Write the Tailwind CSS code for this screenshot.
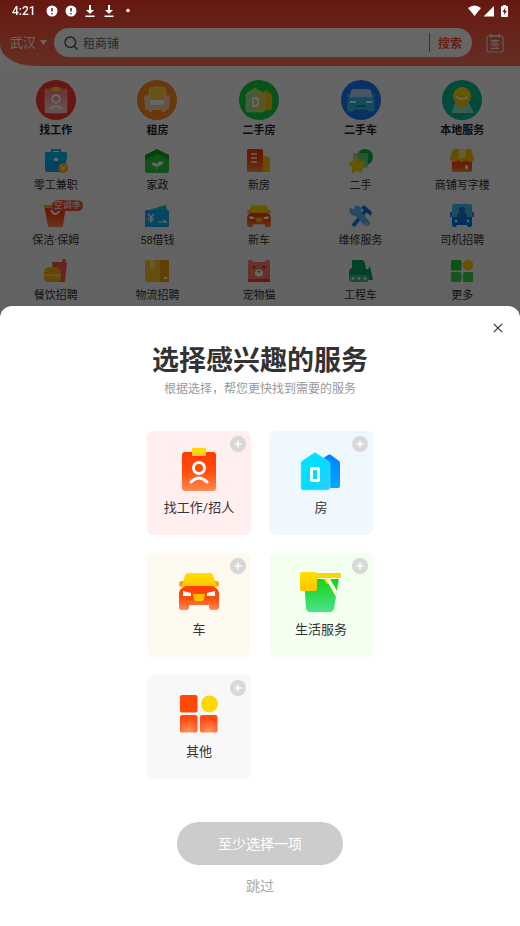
<!doctype html>
<html lang="zh-CN">
  <head>
    <meta charset="UTF-8" />
    <meta name="viewport" content="width=device-width, initial-scale=1.0" />
    <title>选择感兴趣的服务</title>
    <script src="https://cdn.jsdelivr.net/npm/@tailwindcss/browser@4"></script>
  </head>
  <body
    class="min-h-screen overflow-hidden bg-linear-to-b from-white to-[#e4e4e4] font-[Roboto,'Noto_Sans_CJK_SC',sans-serif] text-[#333]"
  >
    <!-- Shared gradients and icons -->
    <svg class="absolute size-0" aria-hidden="true">
      <defs>
        <linearGradient id="red" x2="0" y2="1"><stop stop-color="#ff3c00" /><stop offset=".5" stop-color="#ff4d0c" /><stop offset="1" stop-color="#ff8a50" /></linearGradient>
        <linearGradient id="yellow" x2="0" y2="1"><stop stop-color="#ffe000" /><stop offset="1" stop-color="#ffc400" /></linearGradient>
        <linearGradient id="cyan" x2="1" y2="1"><stop stop-color="#00e5ff" /><stop offset=".5" stop-color="#00dcff" /><stop offset="1" stop-color="#3cf" /></linearGradient>
        <linearGradient id="blue" x2="0" y2="1"><stop stop-color="#0080ff" /><stop offset="1" stop-color="#00a8ff" /></linearGradient>
        <linearGradient id="green" x2="0" y2="1"><stop stop-color="#12d312" /><stop offset="1" stop-color="#4be38a" /></linearGradient>
        <linearGradient id="frost" x2="0" y2="1"><stop stop-color="#fff" stop-opacity=".35" /><stop offset="1" stop-color="#fff" stop-opacity=".8" /></linearGradient>
        <linearGradient id="mint" x2="1" y2="0"><stop stop-color="#8ff0b0" /><stop offset="1" stop-color="#f3d13a" /></linearGradient>
        <radialGradient id="glow" cy="1" r=".8"><stop stop-color="#ff9a68" /><stop offset="1" stop-color="#ff4a12" /></radialGradient>
      </defs>
      <symbol id="car" viewBox="0 0 44 44">
        <rect x="2" y="12" width="40" height="6" rx="3" fill="#ff9a1f" />
        <path d="M11 4h22q2 0 3 2l4 12H5L8 6q1-2 3-2z" fill="url(#yellow)" />
        <path d="M2 25q0-4 3-6 2-2 5-2h24q3 0 5 2 3 2 3 6v13q0 3-3 3h-4q-3 0-3-3v-2H12v2q0 3-3 3H5q-3 0-3-3z" fill="url(#red)" />
        <path d="M6 22l8 2v3H6zM38 22l-8 2v3h8z" fill="#fff" />
        <path d="M16 25h12l-1 5q0 2-2 2h-6q-2 0-2-2z" fill="#ffbd00" />
      </symbol>
    </svg>

    <div
      class="rounded-bl-[34px_22px] bg-linear-to-b from-[#ff3b28] to-[#ff7258] pb-[9px]"
    >
      <!-- Status bar -->
      <div class="relative z-20 flex h-[22px] items-center px-3 text-white">
        <span class="w-[34px] text-xs font-medium">4:21</span>
        <div class="flex items-center gap-[7px]">
          <svg class="size-3" viewBox="0 0 12 12"><circle cx="6" cy="6" r="5.5" fill="#fff" /><path d="M6 3v3.5M6 8v1.3" stroke="#64190f" stroke-width="1.5" /></svg>
          <svg class="size-3" viewBox="0 0 12 12"><circle cx="6" cy="6" r="5.5" fill="#fff" /><path d="M6 3v3.5M6 8v1.3" stroke="#64190f" stroke-width="1.5" /></svg>
          <svg class="size-3" viewBox="0 0 12 12"><path d="M5 0h2v5h3L6 9 2 5h3zM1.500 10.500h9V12h-9z" fill="#fff" /></svg>
          <svg class="size-3" viewBox="0 0 12 12"><path d="M5 0h2v5h3L6 9 2 5h3zM1.500 10.500h9V12h-9z" fill="#fff" /></svg>
          <svg class="size-3" viewBox="0 0 12 12"><circle cx="6" cy="5.5" r="1.8" fill="#fff" /></svg>
        </div>
        <div class="ml-auto flex items-center">
          <svg class="h-3 w-[13px]" viewBox="0 0 13 12"><path d="M0 3q6.500-5 13 0L6.500 11z" fill="#fff" /></svg>
          <svg class="ml-0.5 h-3 w-3" viewBox="0 0 12 12"><path d="M11 1v10.500H.5z" fill="#fff" /></svg>
          <svg class="ml-1.5 h-3 w-[7px]" viewBox="0 0 7 12"><path d="M2 0h3v1h1q1 0 1 1v9q0 1-1 1H1q-1 0-1-1V2q0-1 1-1h1z" fill="#fff" /><path d="M4.500 2.500L1.500 7h1.700v3L6 5.700H4z" fill="#64190f" /></svg>
        </div>
      </div>

      <!-- Search -->
      <header class="mt-1.5 flex items-center pr-4 pl-2.5">
        <button type="button" class="flex w-11 items-center gap-1 text-[13px] text-white">
          武汉
          <svg class="h-[5px] w-[7px]" viewBox="0 0 7 5"><path d="M0 0h7L3.500 5z" fill="#fff" /></svg>
        </button>
        <form class="flex h-[29px] flex-1 items-center rounded-full bg-white px-2.5">
          <svg class="size-3.5" viewBox="0 0 14 14" fill="none" stroke="#555" stroke-width="1.500"><circle cx="6.300" cy="6.300" r="5.300" /><path d="M10 10l3.500 3.500" /></svg>
          <input
            type="text"
            aria-label="搜索服务"
            value="租商铺"
            class="mt-0.5 ml-[5px] min-w-0 flex-1 text-xs text-[#666] outline-none"
          />
          <span class="h-[19px] w-px bg-[#ff4f32]"></span>
          <button type="submit" class="mt-0.5 ml-2 text-xs font-bold text-[#ff4f32]">搜索</button>
        </form>
        <a href="#" aria-label="签到" class="ml-3.5">
          <svg class="h-5 w-[18px]" viewBox="0 0 18 20">
            <rect x="1" y="3" width="16" height="16" rx="2" fill="none" stroke="#eee" stroke-width="1.200" />
            <path d="M4.500 1v4M13.500 1v4M5 3h8" stroke="#eee" stroke-width="1.500" />
            <text x="9" y="14.500" text-anchor="middle" font-size="10" fill="#fff">签</text>
          </svg>
        </a>
      </header>
    </div>

    <!-- Service categories -->
    <nav class="grid grid-cols-5 justify-items-center gap-y-[7px] pt-3.5 pr-[7px] pl-[5px] text-[11px] leading-[22px]">
      <a href="#" class="flex flex-col items-center font-bold text-[#222]">
        <svg class="size-10" viewBox="0 0 40 40"><circle cx="20" cy="20" r="20" fill="#ff3830" /><rect x="9" y="9" width="22" height="24" rx="2" fill="url(#frost)" stroke="#ffc4b5" stroke-width=".6" /><rect x="16" y="7" width="8" height="4" rx="1" fill="#ffd500" /><g fill="none" stroke="#fff" stroke-width="2"><circle cx="20" cy="19" r="3.800" /><path d="M14 29q6-6 12 0" /></g></svg>
        找工作
      </a>
      <a href="#" class="flex flex-col items-center font-bold text-[#222]">
        <svg class="size-10" viewBox="0 0 40 40"><circle cx="20" cy="20" r="20" fill="#ff8c20" /><rect x="12" y="7" width="17" height="16" rx="3.500" fill="#ffd43c" stroke="#ffe788" stroke-width=".6" /><path d="M7 18q0-3 3-3t3 3v2h14v-2q0-3 3-3t3 3l-1 9q0 3-3 3l-1 2h-3v-2H15v2h-3l-1-2q-3 0-3-3z" fill="#ffd1a8" /><path d="M13 20h14v3q0 2-2 2H15q-2 0-2-2z" fill="#fff" /></svg>
        租房
      </a>
      <a href="#" class="flex flex-col items-center font-bold text-[#222]">
        <svg class="size-10" viewBox="0 0 40 40"><circle cx="20" cy="20" r="20" fill="#14cf3c" /><path d="M22 14l5-4 6 5v13q0 2-2 2H22z" fill="#ffc400" /><path d="M7 14l9-6 10 6v16q0 2-2 2H9q-2 0-2-2z" fill="url(#mint)" stroke="#bff5c8" stroke-width=".6" /><rect x="14" y="18" width="5" height="8" rx="1" fill="none" stroke="#fff" stroke-width="2" /></svg>
        二手房
      </a>
      <a href="#" class="flex flex-col items-center font-bold text-[#222]">
        <svg class="size-10" viewBox="0 0 40 40"><circle cx="20" cy="20" r="20" fill="#1c7cf5" /><path d="M13 9h14q2 0 3 2l2 8H8l2-8q1-2 3-2z" fill="#b9d6ff" /><path d="M6 14h3v3H6zM31 14h3v3h-3z" fill="#27bde4" /><path d="M7 21q0-3 3-4h20q3 1 3 4v8q0 2-2 2h-2q-2 0-2-2H13q0 2-2 2H9q-2 0-2-2z" fill="#28bfe6" stroke="#75dcf5" stroke-width=".6" /><path d="M9 22h6M25 22h6" stroke="#fff" stroke-width="2" /><path d="M15 26h10" stroke="#1587ca" stroke-width="2" /></svg>
        二手车
      </a>
      <a href="#" class="flex flex-col items-center font-bold text-[#222]">
        <svg class="size-10" viewBox="0 0 40 40"><circle cx="20" cy="20" r="20" fill="#06b98f" /><path d="M14 21h12l6 12H9z" fill="#8ee5c0" /><path d="M20 29l-6-6q-3-3-3-7a9 9 0 0 1 18 0q0 4-3 7z" fill="url(#yellow)" /><path d="M15 17q5 4 10 0" fill="none" stroke="#fff" stroke-width="2" stroke-linecap="round" /></svg>
        本地服务
      </a>

      <a href="#" class="flex flex-col items-center gap-0.5">
        <svg class="size-6" viewBox="0 0 24 24"><path d="M8 3V1h8v2" fill="none" stroke="#0090ff" stroke-width="1.600" /><rect x="1" y="8" width="21" height="15" rx="2" fill="#08a5f5" /><path d="M2 3h20q1 0 1 1v6q-11 4-22 0V4q0-1 1-1z" fill="#00bde8" /><rect x="10" y="9" width="4" height="3" fill="#fff" /><circle cx="19" cy="19" r="5" fill="#ffb000" /><path d="M16.500 16l2.500 2.500 2.500-2.500M16.500 19h5M19 18.500V22" stroke="#fff" fill="none" /></svg>
        零工兼职
      </a>
      <a href="#" class="flex flex-col items-center gap-0.5">
        <svg class="size-6" viewBox="0 0 24 24"><path d="M0 6l12-6 12 6v7H0z" fill="#06a91d" /><path d="M0 11l12-6 12 6v11q0 2-2 2H2q-2 0-2-2z" fill="#30cb45" /><path d="M12 21v-4q-4 1-5-3 4-1 5 2 1-4 6-3-1 4-6 4" fill="#fff" stroke="#fff" stroke-width=".6" /></svg>
        家政
      </a>
      <a href="#" class="flex flex-col items-center gap-0.5">
        <svg class="size-6" viewBox="0 0 24 24"><path d="M15 7h3l5 2v13q0 1-1 1h-7z" fill="#ffc400" /><rect x="0" y="0" width="16" height="23" rx="1.500" fill="url(#red)" /><path d="M4 5h6M4 9h6M4 13h6" stroke="#fff" stroke-width="1.300" /></svg>
        新房
      </a>
      <a href="#" class="flex flex-col items-center gap-0.5">
        <svg class="size-6" viewBox="0 0 24 24"><circle cx="16" cy="8" r="8" fill="#08b943" /><rect x="4" y="4" width="15" height="15" rx="2" fill="#7bdc8b" opacity=".8" /><path d="M8 7l3 5 6 1-4 5 1 6-6-2-5 2v-6l-4-4 6-2z" fill="#ffd500" /></svg>
        二手
      </a>
      <a href="#" class="flex flex-col items-center gap-0.5">
        <svg class="size-6" viewBox="0 0 24 24"><rect x="2" y="10" width="20" height="13" rx="1.500" fill="url(#red)" /><path d="M3 0h18l3 9q0 4-4 4-3 0-4-2-4 4-8 0-1 2-4 2-4 0-4-4z" fill="#ffc400" /><path d="M9 0h7v9H8z" fill="#ffe57c" /><rect x="15" y="16" width="3" height="4" rx="1" fill="#fff" /></svg>
        商铺写字楼
      </a>

      <a href="#" class="flex flex-col items-center gap-0.5">
        <span class="relative">
          <svg class="size-6" viewBox="0 0 24 24"><path d="M0 1h22l-3 21q0 1-1 1H5q-1 0-1-1z" fill="url(#red)" /><path d="M0 1h10v3H1z" fill="#ffb300" /><path d="M7 6q4 8 9 0" fill="none" stroke="#fff" stroke-width="2" /></svg>
          <span class="absolute -top-1 left-2 h-[11px] rounded-full rounded-bl-none bg-[#ff4b36] px-0.5 text-[9px] leading-[11px] whitespace-nowrap text-white">空调季</span>
        </span>
        保洁·保姆
      </a>
      <a href="#" class="flex flex-col items-center gap-0.5">
        <svg class="size-6" viewBox="0 0 24 24"><path d="M1 7l19-6q1 0 1 1l2 6z" fill="#0ccad5" /><rect y="6" width="24" height="17" rx="1.500" fill="#0cacf4" /><path d="M3 10l3 3 3-3M3 14h6M3 16h6M6 13v6M13 18h8l-3-2" fill="none" stroke="#fff" stroke-width="1.200" /></svg>
        58借钱
      </a>
      <a href="#" class="flex flex-col items-center gap-0.5">
        <svg class="size-6" viewBox="0 0 24 24"><use href="#car" x="-1" y="-1" width="26" height="26" /></svg>
        新车
      </a>
      <a href="#" class="flex flex-col items-center gap-0.5">
        <svg class="size-6" viewBox="0 0 24 24"><path d="M4 22L18 5" stroke="#0b87f0" stroke-width="4" /><path d="M15 1l8 7-1 4-10-8z" fill="#0878e8" /><path d="M1 3l4 3 1-4q4-1 6 2v4l8 9q2 3-1 5-2 1-4-1l-8-9q-6 0-7-5z" fill="#5bb9ed" /><circle cx="17.500" cy="20" r="1" fill="#fff" /></svg>
        维修服务
      </a>
      <a href="#" class="flex flex-col items-center gap-0.5">
        <svg class="size-6" viewBox="0 0 24 24"><path d="M0 8h24v5H0z" fill="#2b8ee8" /><rect x="2" y="0" width="20" height="15" rx="2" fill="#43bdf0" /><path d="M9 6a3 3 0 1 1 6 0q0 2-1 2 3 1 3 5H7q0-4 3-5-1 0-1-2z" fill="#147bc7" /><path d="M2 13h20v8q0 2-2 2h-2l-1-2H7l-1 2H4q-2 0-2-2z" fill="#0875e6" /><circle cx="6" cy="17" r="1.300" fill="#fff" /><circle cx="18" cy="17" r="1.300" fill="#fff" /></svg>
        司机招聘
      </a>

      <a href="#" class="flex flex-col items-center gap-0.5">
        <svg class="size-6" viewBox="0 0 24 24"><path d="M8 3h10l1-3h3l-1 3h2l-2 19q0 1-1 1H10z" fill="#ff5945" /><path d="M0 14q0-6 6-6h5q6 0 6 6v5q0 4-4 4H4q-4 0-4-4z" fill="#ffae16" /><path d="M0 15h17v2l-5 2-3-2H0z" fill="#ffd33c" /></svg>
        餐饮招聘
      </a>
      <a href="#" class="flex flex-col items-center gap-0.5">
        <svg class="size-6" viewBox="0 0 24 24"><rect y="1" width="24" height="22" rx="1.500" fill="#ffc42c" /><path d="M15 1h8q1 0 1 1v20q0 1-1 1h-8z" fill="#f5a000" /><path d="M5 1h5v8H5z" fill="#ffe36c" /><path d="M19 18h3v2h-3z" fill="#fff" /></svg>
        物流招聘
      </a>
      <a href="#" class="flex flex-col items-center gap-0.5">
        <svg class="size-6" viewBox="0 0 24 24"><path d="M1 20V3q0-3 3-2l3 2h10l3-2q3-1 3 2v17z" fill="#ff7b6b" /><path d="M1 20h22v3H1z" fill="#f33c2c" /><circle cx="7" cy="8" r="1.500" fill="#d82d20" /><circle cx="17" cy="8" r="1.500" fill="#d82d20" /><ellipse cx="12" cy="14" rx="4" ry="3.500" fill="#fff" /><path d="M10.500 12h3L12 14z" fill="#d82d20" /></svg>
        宠物猫
      </a>
      <a href="#" class="flex flex-col items-center gap-0.5">
        <svg class="size-6" viewBox="0 0 24 24"><path d="M4 1h9q2 0 3 3l1 6h2l2-3 3 14H2q-2-1-2-4v-5q0-2 3-3V2z" fill="#08a568" /><rect y="16" width="20" height="7" rx="3.500" fill="#3dbd8a" /><g fill="#fff"><circle cx="4" cy="19.500" r="1.300" /><circle cx="10" cy="19.500" r="1.300" /><circle cx="16" cy="19.500" r="1.300" /></g></svg>
        工程车
      </a>
      <a href="#" class="flex flex-col items-center gap-0.5">
        <svg class="size-6" viewBox="0 0 24 24"><rect x="1" y="1" width="10.500" height="10.500" rx="1.500" fill="#22c936" /><circle cx="18" cy="6" r="5.300" fill="#ffc800" /><rect x="1" y="13" width="10.500" height="10" rx="1.500" fill="#3bd24c" /><rect x="13" y="13" width="10" height="10" rx="1.500" fill="#3bd24c" /></svg>
        更多
      </a>
    </nav>

    <!-- Bottom sheet -->
    <div class="fixed inset-0 z-10 flex flex-col justify-end bg-black/60">
      <section
        role="dialog"
        aria-labelledby="sheet-title"
        class="relative flex flex-col items-center rounded-t-xl bg-white pt-[37px] pb-[30px]"
      >
        <button type="button" aria-label="关闭" class="absolute top-2.5 right-2.5 flex size-6 items-center justify-center">
          <svg class="size-2.5" viewBox="0 0 10 10" stroke="#333" stroke-width="1.200"><path d="M.8.8l8.400 8.400M9.200.8L.8 9.200" /></svg>
        </button>

        <h1 id="sheet-title" class="text-[27px] leading-9 font-bold">选择感兴趣的服务</h1>
        <p class="text-xs leading-5 text-[#999]">根据选择，帮您更快找到需要的服务</p>

        <div class="mt-8 grid grid-cols-[104px_104px] gap-[18px] text-[13px] leading-5">
          <button type="button" aria-pressed="false" class="relative flex h-[104px] flex-col items-center rounded-md bg-[#ffefee] pt-4">
            <svg class="size-11" viewBox="0 0 44 44"><rect x="5" y="5" width="34" height="39" rx="3" fill="url(#red)" /><rect x="15" y="1" width="14" height="8" rx="1" fill="#ffbd45" /><rect x="15" y="1" width="14" height="5" rx="1" fill="#ffdb00" /><g fill="none" stroke="#fff" stroke-width="3"><circle cx="22" cy="21" r="5.500" /><path d="M14 35q8-8 16 0" stroke-linecap="round" /></g></svg>
            <span class="mt-[7px]">找工作/招人</span>
            <svg class="absolute top-[5px] right-[5px] size-4" viewBox="0 0 16 16"><circle cx="8" cy="8" r="8" fill="#d8d8d8" /><path d="M8 4.500v7M4.500 8h7" stroke="#fff" stroke-width="1.500" /></svg>
          </button>
          <button type="button" aria-pressed="false" class="relative flex h-[104px] flex-col items-center rounded-md bg-[#eff7ff] pt-4">
            <svg class="size-11" viewBox="0 0 44 44"><path d="M20 14l9-6q1-1 3 0l8 6q1 1 1 2v23q0 2-2 2H20z" fill="url(#blue)" /><path d="M3 14l12-8q1-1 2 0l12 8q2 1 2 3v23q0 3-3 3H4q-2 0-2-2V16q0-1 1-2z" fill="url(#cyan)" stroke="#6eeaff" stroke-width=".5" /><rect x="12.500" y="21.500" width="7" height="12" rx="1" fill="none" stroke="#fff" stroke-width="3" /></svg>
            <span class="mt-[7px]">房</span>
            <svg class="absolute top-[5px] right-[5px] size-4" viewBox="0 0 16 16"><circle cx="8" cy="8" r="8" fill="#d8d8d8" /><path d="M8 4.500v7M4.500 8h7" stroke="#fff" stroke-width="1.500" /></svg>
          </button>
          <button type="button" aria-pressed="false" class="relative flex h-[104px] flex-col items-center rounded-md bg-[#fffaef] pt-4">
            <svg class="size-11"><use href="#car" /></svg>
            <span class="mt-[7px]">车</span>
            <svg class="absolute top-[5px] right-[5px] size-4" viewBox="0 0 16 16"><circle cx="8" cy="8" r="8" fill="#d8d8d8" /><path d="M8 4.500v7M4.500 8h7" stroke="#fff" stroke-width="1.500" /></svg>
          </button>
          <button type="button" aria-pressed="false" class="relative flex h-[104px] flex-col items-center rounded-md bg-[#f3ffef] pt-4">
            <svg class="size-11" viewBox="0 0 44 44"><path d="M5 9h35l-5 31q-1 3-3 3H10q-2 0-3-3z" fill="url(#green)" /><path d="M16 4h25q1 0 1 1v3q0 1-1 1H16z" fill="#f2dc00" /><path d="M16 9.500h25" stroke="#fff" /><path d="M24 10h8v5h-4z" fill="#f2cd00" /><path d="M27 10l10 18 1-6-7-12z" fill="#fffbd8" /><rect x="1" y="3" width="17" height="19" rx="2" fill="url(#yellow)" /></svg>
            <span class="mt-[7px]">生活服务</span>
            <svg class="absolute top-[5px] right-[5px] size-4" viewBox="0 0 16 16"><circle cx="8" cy="8" r="8" fill="#d8d8d8" /><path d="M8 4.500v7M4.500 8h7" stroke="#fff" stroke-width="1.500" /></svg>
          </button>
          <button type="button" aria-pressed="false" class="relative flex h-[104px] flex-col items-center rounded-md bg-[#f8f8f8] pt-4">
            <svg class="size-11" viewBox="0 0 44 44"><rect x="3" y="4" width="17.500" height="17.500" rx="2" fill="#ff4a06" /><circle cx="32.500" cy="13" r="8.500" fill="#ffd900" /><rect x="3" y="24" width="17.500" height="17.500" rx="2" fill="url(#glow)" /><rect x="23" y="24" width="17.500" height="17.500" rx="2" fill="url(#glow)" /></svg>
            <span class="mt-[7px]">其他</span>
            <svg class="absolute top-[5px] right-[5px] size-4" viewBox="0 0 16 16"><circle cx="8" cy="8" r="8" fill="#d8d8d8" /><path d="M8 4.500v7M4.500 8h7" stroke="#fff" stroke-width="1.500" /></svg>
          </button>
        </div>

        <button type="button" class="mt-[43px] h-[43px] w-[166px] rounded-full bg-[#ccc] text-sm text-white">至少选择一项</button>
        <button type="button" class="mt-[11px] text-sm leading-5 text-[#aaa]">跳过</button>
      </section>
    </div>
  </body>
</html>
